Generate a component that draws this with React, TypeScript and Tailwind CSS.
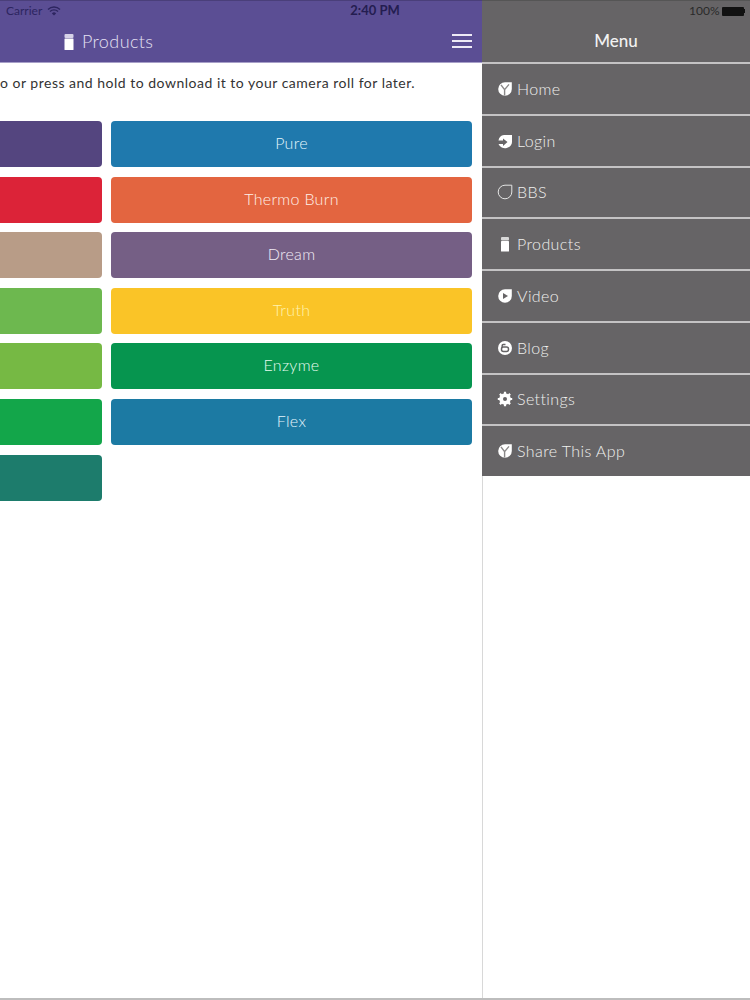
import React from "react";

const leaf = "M8 1.2H14.8V8A6.8 6.8 0 0 1 1.2 8A6.8 6.8 0 0 1 8 1.2Z";

const icons: Record<string, React.ReactNode> = {
  home: (
    <>
      <path d={leaf} fill="#fff" />
      <path d="M4 3.8L7.6 8.6L12 3.4M7.6 8.6V14.5" fill="none" stroke="#8a8888" strokeWidth="1.4" />
    </>
  ),
  login: (
    <>
      <path d="M7 2H15V8A7 6.5 0 0 1 1.5 11H6V13L10.5 9L6 5.5V7.5H1.5A6.5 6.5 0 0 1 7 2Z" fill="#fff" />
    </>
  ),
  bbs: <path d={leaf} fill="none" stroke="#e4e4e4" strokeWidth="1" />,
  products: (
    <>
      <rect x="4" y="1" width="8" height="3.5" rx="1" fill="#d8d8d8" />
      <rect x="4" y="5" width="8" height="10.5" rx="0.5" fill="#fff" />
    </>
  ),
  video: (
    <>
      <path d={leaf} fill="#fff" />
      <path d="M6 5L11 8L6 11Z" fill="#666466" />
    </>
  ),
  blog: (
    <>
      <circle cx="8" cy="8" r="7" fill="#fff" />
      <rect x="4.5" y="7" width="7" height="4.5" rx="2" fill="none" stroke="#666466" strokeWidth="1.5" />
      <path d="M5.2 8V5.5A1 1 0 0 1 6.2 4.5H8.5" fill="none" stroke="#666466" strokeWidth="1.5" />
    </>
  ),
  settings: (
    <>
      <circle cx="8" cy="8" r="5.8" fill="#fff" />
      <path
        d="M8 .8V15.2M.8 8H15.2M2.9 2.9L13.1 13.1M13.1 2.9L2.9 13.1"
        stroke="#fff"
        strokeWidth="2.2"
        strokeDasharray="2.6 9.4"
      />
      <circle cx="8" cy="8" r="2" fill="#666466" />
    </>
  ),
};

const leftColors = ["#54457f", "#dc2338", "#b89c87", "#6db84f", "#76b944", "#13a64a", "#1d7c6c"];

const rightButtons = [
  { label: "Pure", color: "#1f79ad", text: "text-[#e4f6fc]" },
  { label: "Thermo Burn", color: "#e36540", text: "text-[#fff0e8]" },
  { label: "Dream", color: "#755f85", text: "text-[#f2ecf6]" },
  { label: "Truth", color: "#fac427", text: "text-[#fff3b0]" },
  { label: "Enzyme", color: "#06954f", text: "text-[#e6fbef]" },
  { label: "Flex", color: "#1c7aa3", text: "text-[#e4f4fb]" },
];

const menuItems = [
  { label: "Home", icon: "home" },
  { label: "Login", icon: "login" },
  { label: "BBS", icon: "bbs" },
  { label: "Products", icon: "products" },
  { label: "Video", icon: "video" },
  { label: "Blog", icon: "blog" },
  { label: "Settings", icon: "settings" },
  { label: "Share This App", icon: "home" },
];

function Icon({ name }: { name: string }) {
  return (
    <svg viewBox="0 0 16 16" className="w-[16px] h-[16px] shrink-0">
      {icons[name]}
    </svg>
  );
}

export default function App() {
  return (
    <div className="relative flex w-[750px] h-[1000px] overflow-hidden bg-white font-['Lato',sans-serif]">
      {/* iOS status bar sits over both panes */}
      <div className="absolute top-[1px] left-0 right-0 z-10 flex items-center justify-between h-[20px] px-[5px] text-[12px] text-[#2d2560]">
        <div className="flex items-center gap-[5px] w-[120px] pl-[1px]">
          <span>Carrier</span>
          <svg viewBox="0 0 14 10" className="w-[14px] h-[10px]">
            <path d="M1 3.5A8.5 8.5 0 0 1 13 3.5M3 5.6A5.6 5.6 0 0 1 11 5.6" fill="none" stroke="#2d2560" strokeWidth="1.4" />
            <path d="M4.9 7.4A3 3 0 0 1 9.1 7.4L7 9.6Z" fill="#2d2560" />
          </svg>
        </div>
        <span className="text-[13px] font-bold text-[#241d50]">2:40 PM</span>
        <div className="flex items-center justify-end gap-[2px] w-[120px] text-[#2a2a2a]">
          <span>100%</span>
          <div className="flex items-center">
            <div className="w-[22px] h-[9px] rounded-[1px] bg-[#111]" />
            <div className="w-[1.5px] h-[4px] bg-[#111]" />
          </div>
        </div>
      </div>

      {/* Products page, slid left by the open menu */}
      <div className="w-[482px] shrink-0 overflow-hidden">
        <header className="flex items-end justify-between h-[63px] pb-[7px] pl-[64px] pr-[10px] bg-[#5b4e94] border-t border-[#4a3f7a] border-b border-b-[#a79fc8]">
          <div className="flex items-center gap-[8px]">
            <svg viewBox="0 0 10 16" className="w-[10px] h-[16px]">
              <rect x="0.5" y="0" width="9" height="4" rx="1" fill="#d6d2e8" />
              <rect x="0.5" y="4.5" width="9" height="11.5" rx="0.5" fill="#fff" />
            </svg>
            <span className="text-[18px] font-light tracking-[0.4px] text-[#e4e0f2]">Products</span>
          </div>
          <div className="flex flex-col gap-[3.5px] w-[20px] mb-[7px]">
            <div className="h-[2.5px] bg-[#eeeaf6]" />
            <div className="h-[2.5px] bg-[#eeeaf6]" />
            <div className="h-[2.5px] bg-[#eeeaf6]" />
          </div>
        </header>

        <p className="mt-[10px] h-[24px] text-[14px] leading-[20px] tracking-[0.5px] text-[#333] whitespace-nowrap">
          o or press and hold to download it to your camera roll for later.
        </p>

        <div className="flex justify-end gap-[9px] mt-[24px] pr-[10px]">
          <div className="flex flex-col gap-[9.6px] w-[361px] shrink-0">
            {leftColors.map((color) => (
              <div key={color} className="h-[46px] rounded-[4px]" style={{ backgroundColor: color }} />
            ))}
          </div>
          <div className="flex flex-col gap-[9.6px] w-[361px] shrink-0">
            {rightButtons.map((b) => (
              <div
                key={b.label}
                className={`flex items-center justify-center h-[46px] pb-[2px] rounded-[4px] text-[16px] font-light tracking-[0.3px] ${b.text}`}
                style={{ backgroundColor: b.color }}
              >
                {b.label}
              </div>
            ))}
          </div>
        </div>
      </div>

      {/* Side menu */}
      <aside className="flex flex-col flex-1">
        <div className="flex items-end justify-center h-[62px] pb-[9px] bg-[#666466] border-t border-[#555] text-[17px] font-medium text-[#f2f2f2]">
          Menu
        </div>
        <nav className="bg-[#666466]">
          {menuItems.map((item) => (
            <div
              key={item.label}
              className="flex items-center gap-[4px] h-[51.75px] pl-[15px] border-t-2 border-[#c4c3c4] text-[16px] font-light tracking-[0.4px] text-[#f0f0ee]"
            >
              <Icon name={item.icon} />
              <span>{item.label}</span>
            </div>
          ))}
        </nav>
        <div className="flex-1 border-l border-l-[#d8d8d8]" />
      </aside>

      <div className="absolute left-0 right-0 bottom-0 h-[2px] bg-[#bdbdbd]" />
    </div>
  );
}
